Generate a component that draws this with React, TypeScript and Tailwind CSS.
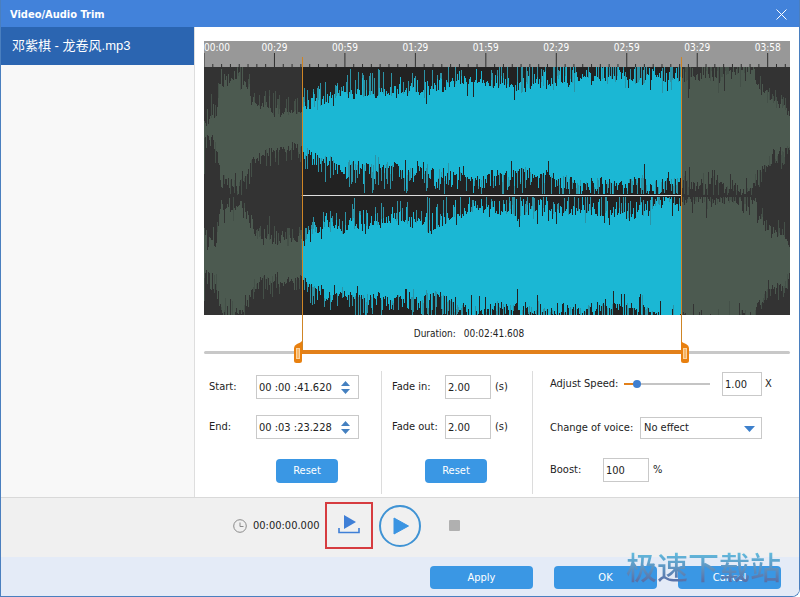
import React, { useState } from 'react'

const TOTAL = 249.5
const SELECTION = { start: 41.62, end: 203.228 }
const MARKS = ['00:00', '00:29', '00:59', '01:29', '01:59', '02:29', '02:59', '03:29', '03:58']
const MARK_STEP = 30

const WAVE_W = 586
const WAVE_H = 248

// [x, solid half height, spike half height]
const ENVELOPE = [
  [0, 8, 46],
  [12, 10, 36],
  [16, 38, 62],
  [24, 42, 66],
  [36, 46, 70],
  [44, 34, 60],
  [48, 24, 56],
  [52, 20, 34],
  [66, 18, 46],
  [76, 18, 34],
  [96, 17, 34],
  [100, 22, 42],
  [118, 27, 54],
  [138, 28, 46],
  [142, 34, 62],
  [170, 36, 64],
  [190, 34, 58],
  [205, 32, 66],
  [230, 32, 64],
  [255, 38, 66],
  [272, 44, 70],
  [290, 44, 72],
  [315, 37, 68],
  [335, 44, 72],
  [350, 42, 72],
  [370, 44, 74],
  [400, 46, 74],
  [420, 46, 72],
  [426, 42, 66],
  [440, 48, 72],
  [478, 52, 74],
  [550, 53, 72],
  [553, 34, 64],
  [562, 30, 42],
  [572, 27, 42],
  [580, 23, 38],
  [586, 12, 24]
]

function random(seed: number) {
  let s = seed
  return () => {
    s = (s * 16807) % 2147483647
    return s / 2147483647
  }
}

function envelopeAt(x: number) {
  const i = Math.max(1, ENVELOPE.findIndex((p) => p[0] > x))
  const a = ENVELOPE[i - 1]
  const b = ENVELOPE[i]
  const t = (x - a[0]) / (b[0] - a[0])
  return [a[1] + (b[1] - a[1]) * t, a[2] + (b[2] - a[2]) * t]
}

function channelPath(center: number, min: number, max: number, seed: number) {
  const next = random(seed)
  let body = ''
  let spikes = ''
  let drift = 0
  for (let x = 0; x < WAVE_W; x++) {
    const [solid, peak] = envelopeAt(x)
    drift = Math.max(-4, Math.min(6, drift + (next() - 0.5) * 5))
    const side = () => {
      const notch = next() > 0.86 ? next() * solid * 0.35 : 0
      return solid + drift - notch + next() * next() * (peak - solid) * 0.8
    }
    const top = Math.max(min, Math.round(center - side()))
    const bottom = Math.min(max, Math.round(center + side()))
    body += `M${x} ${top}h1V${bottom}h-1z`
    if (next() > 0.74) {
      const y = Math.max(min, Math.round(center - solid - (peak - solid) * (0.4 + next() * 0.6)))
      spikes += `M${x} ${y}h1V${center}h-1z`
    }
    if (next() > 0.74) {
      const y = Math.min(max, Math.round(center + solid + (peak - solid) * (0.4 + next() * 0.6)))
      spikes += `M${x} ${center}h1V${y}h-1z`
    }
  }
  return { body, spikes }
}

const CHANNELS = [channelPath(63, 0, 128, 4211), channelPath(193, 130, 248, 90437)]

const percent = (seconds: number) => `${(seconds / TOTAL) * 100}%`

function Ruler() {
  return (
    <svg className="block h-[26px] w-full bg-[#989898] font-[inherit]">
      {MARKS.map((mark, i) => (
        <g key={mark}>
          <line x1={percent(i * MARK_STEP)} x2={percent(i * MARK_STEP)} y1="12" y2="26" stroke="#2f2f2f" />
          {[1, 2, 3, 4, 5, 6, 7].map((n) => (
            <line
              key={n}
              x1={percent((i + n / 8) * MARK_STEP)}
              x2={percent((i + n / 8) * MARK_STEP)}
              y1="23"
              y2="26"
              stroke="#2f2f2f"
            />
          ))}
          <text
            x={percent(i * MARK_STEP)}
            y="10"
            textAnchor={i === 0 ? 'start' : 'middle'}
            fill="#ffffff"
            className="text-[10px]"
          >
            {mark}
          </text>
        </g>
      ))}
    </svg>
  )
}

function Waveform() {
  const left = (SELECTION.start / TOTAL) * WAVE_W
  const right = (SELECTION.end / TOTAL) * WAVE_W

  return (
    <svg
      className="block h-[248px] w-full"
      viewBox={`0 0 ${WAVE_W} ${WAVE_H}`}
      preserveAspectRatio="none"
      shapeRendering="crispEdges"
    >
      <defs>
        <clipPath id="selected">
          <rect x={left} y="0" width={right - left} height={WAVE_H} />
        </clipPath>
      </defs>
      <rect width={WAVE_W} height={WAVE_H} fill="#333333" />
      {CHANNELS.map((c, i) => (
        <g key={i}>
          <path d={c.spikes} fill="#445048" />
          <path d={c.body} fill="#4c5a50" />
        </g>
      ))}
      <g clipPath="url(#selected)">
        <rect width={WAVE_W} height={WAVE_H} fill="#222222" />
        {CHANNELS.map((c, i) => (
          <g key={i}>
            <path d={c.spikes} fill="#2b93a6" />
            <path d={c.body} fill="#1bb7d4" />
          </g>
        ))}
        <rect y="127" width={WAVE_W} height="3" fill="#222222" />
        <rect y="128" width={WAVE_W} height="1" fill="#dddddd" />
      </g>
    </svg>
  )
}

function TrimHandle({ flipped }: { flipped?: boolean }) {
  return (
    <svg className={flipped ? 'block -scale-x-100' : 'block'} width="8" height="22" viewBox="0 0 8 22">
      <path d="M8 0v19.500q0 2.500-2.500 2.500h-3Q0 22 0 19.500V7q0-2.500 3-4Q7 1.500 8 0z" fill="#e8800f" />
      <rect x="2.500" y="7.500" width="3" height="10" fill="#f6b565" stroke="#fbd3a0" />
    </svg>
  )
}

function TrimSlider() {
  const [start, setStart] = useState(SELECTION.start)
  const [end, setEnd] = useState(SELECTION.end)

  return (
    <div className="relative flex h-[22px] items-center">
      <div className="h-[3px] w-full rounded-full bg-[#c8c8c8]" />
      <div
        className="absolute h-1 bg-[#e2801a]"
        style={{ left: percent(start), width: percent(end - start) }}
      />
      <div className="absolute top-0 -translate-x-full" style={{ left: percent(start) }}>
        <TrimHandle />
      </div>
      <div className="absolute top-0" style={{ left: percent(end) }}>
        <TrimHandle flipped />
      </div>
      <input
        type="range"
        aria-label="Start"
        min={0}
        max={TOTAL}
        step="any"
        value={start}
        onChange={(e) => setStart(Math.min(Number(e.target.value), end))}
        className="absolute left-0 h-full w-1/2 opacity-0"
      />
      <input
        type="range"
        aria-label="End"
        min={0}
        max={TOTAL}
        step="any"
        value={end}
        onChange={(e) => setEnd(Math.max(Number(e.target.value), start))}
        className="absolute right-0 h-full w-1/2 opacity-0"
      />
    </div>
  )
}

function TimeField({ id, label, value }: { id: string; label: string; value: string }) {
  return (
    <div className="flex h-6 items-center">
      <label htmlFor={id} className="w-[47px]">
        {label}
      </label>
      <div className="flex h-6 w-[103px] items-center border border-[#c9c9c9] bg-white pr-2">
        <input id={id} defaultValue={value} className="h-full w-full min-w-0 flex-1 pl-0.5 outline-none" />
        <div className="flex flex-col gap-[3px]">
          <button type="button" aria-label={`${label} up`}>
            <svg className="block" width="9" height="5" viewBox="0 0 9 5">
              <path d="M4.500 0L9 5H0z" fill="#4480c0" />
            </svg>
          </button>
          <button type="button" aria-label={`${label} down`}>
            <svg className="block" width="9" height="5" viewBox="0 0 9 5">
              <path d="M4.500 5L9 0H0z" fill="#4480c0" />
            </svg>
          </button>
        </div>
      </div>
    </div>
  )
}

function FadeField({ id, label }: { id: string; label: string }) {
  return (
    <div className="flex h-6 items-center">
      <label htmlFor={id} className="w-[53px] whitespace-nowrap">
        {label}
      </label>
      <input id={id} defaultValue="2.00" className="h-6 w-[46px] border border-[#c9c9c9] px-0.5 outline-none" />
      <span className="ml-1">(s)</span>
    </div>
  )
}

function ResetButton() {
  return (
    <button type="button" className="h-6 w-[62px] rounded bg-[#3a97e4] text-white">
      Reset
    </button>
  )
}

function Settings() {
  const [speed, setSpeed] = useState(1)

  return (
    <div className="grid grid-cols-[178fr_151fr_257fr]">
      <div className="flex flex-col gap-4 border-r border-[#dcdcdc] pt-1 pl-[5px]">
        <TimeField id="start" label="Start:" value="00 :00 :41.620" />
        <TimeField id="end" label="End:" value="00 :03 :23.228" />
        <div className="flex pt-1 pl-[67px]">
          <ResetButton />
        </div>
      </div>

      <div className="flex flex-col gap-4 border-r border-[#dcdcdc] pt-1 pl-[10px]">
        <FadeField id="fade-in" label="Fade in:" />
        <FadeField id="fade-out" label="Fade out:" />
        <div className="flex pt-1 pl-[33px]">
          <ResetButton />
        </div>
      </div>

      <div className="flex flex-col pt-px pb-3 pl-[17px]">
        <div className="flex h-6 items-center">
          <label htmlFor="speed" className="w-[74px] whitespace-nowrap">
            Adjust Speed:
          </label>
          <div className="relative flex h-2 w-[86px] items-center">
            <div className="h-0.5 w-full bg-[#c4c4c4]" />
            <div className="absolute h-0.5 bg-[#e2801a]" style={{ width: `${speed * 14}%` }} />
            <div className="absolute size-2 -translate-x-1/2 rounded-full bg-[#3f7fd0]" style={{ left: `${speed * 15}%` }} />
            <input
              id="speed"
              type="range"
              min={0.1}
              max={6}
              step={0.1}
              value={speed}
              onChange={(e) => setSpeed(Number(e.target.value))}
              className="absolute inset-0 w-full opacity-0"
            />
          </div>
          <input
            aria-label="Speed value"
            value={speed.toFixed(2)}
            readOnly
            className="ml-3 h-6 w-10 border border-[#c9c9c9] px-0.5 outline-none"
          />
          <span className="ml-[3px]">X</span>
        </div>

        <div className="mt-5 flex h-6 items-center">
          <label htmlFor="voice" className="w-[90px] whitespace-nowrap">
            Change of voice:
          </label>
          <div className="relative">
            <select
              id="voice"
              className="block h-[22px] w-[122px] appearance-none border border-[#c9c9c9] bg-white pl-[3px] outline-none"
            >
              <option>No effect</option>
              <option>Female voice</option>
              <option>Male voice</option>
            </select>
            <svg
              className="pointer-events-none absolute top-[9px] right-[7px]"
              width="11"
              height="6"
              viewBox="0 0 11 6"
            >
              <path d="M0 0h11L5.500 6z" fill="#3d80cc" />
            </svg>
          </div>
        </div>

        <div className="mt-[18px] flex h-6 items-center">
          <label htmlFor="boost" className="w-[53px]">
            Boost:
          </label>
          <input id="boost" defaultValue="100" className="h-6 w-[46px] border border-[#c9c9c9] px-0.5 outline-none" />
          <span className="ml-1">%</span>
        </div>
      </div>
    </div>
  )
}

function Player() {
  return (
    <div className="flex h-[60px] items-center border-t border-[#d9d9d9] bg-[#f0f0f0] pb-1 pl-[232px]">
      <svg width="14" height="14" viewBox="0 0 14 14" fill="none" stroke="#8a8a8a">
        <circle cx="7" cy="7" r="6.300" />
        <path d="M7 3.500V7.500h3.500" />
      </svg>
      <span className="ml-1.5 w-[72px]">00:00:00.000</span>
      <button
        type="button"
        aria-label="Play selection"
        className="flex h-[47px] w-12 items-center justify-center border-2 border-[#d63c40]"
      >
        <svg width="24" height="22" viewBox="0 0 24 22">
          <path d="M7 0l12 7-12 7z" fill="#3f7fd6" />
          <path d="M2 13v4.500h20V13" fill="none" stroke="#3f7fd6" strokeWidth="1.600" />
        </svg>
      </button>
      <button
        type="button"
        aria-label="Play"
        className="ml-1.5 flex size-[42px] items-center justify-center rounded-full border-2 border-[#3f93d4]"
      >
        <svg className="ml-0.5" width="16" height="18" viewBox="0 0 16 18">
          <path d="M1 1l14.500 8L1 17z" fill="#3a94e2" stroke="#3a94e2" strokeLinejoin="round" />
        </svg>
      </button>
      <button type="button" aria-label="Stop" className="ml-7 size-[11px] rounded-[1px] bg-[#b0b0b0]" />
    </div>
  )
}

function DialogButton({ children }: { children: React.ReactNode }) {
  return (
    <button type="button" className="h-[23px] w-[103px] rounded bg-[#3a97e4] text-white">
      {children}
    </button>
  )
}

export default function App() {
  return (
    <div className="flex min-h-screen flex-col overflow-hidden rounded-br-lg border border-t-0 border-[#4a7fbf] bg-white font-['DejaVu_Sans_Condensed','Noto_Sans_CJK_SC',sans-serif] text-[11px] leading-4 text-[#222]">
      <header className="flex h-[27px] items-center justify-between bg-[#4282da] pt-0.5 pr-3 pl-[9px] text-white">
        <h1 className="font-bold">Video/Audio Trim</h1>
        <button type="button" aria-label="Close">
          <svg className="block" width="11" height="11" viewBox="0 0 11 11" stroke="#ffffff" fill="none">
            <path d="M.5.500l10 10M10.500.500l-10 10" />
          </svg>
        </button>
      </header>

      <div className="flex flex-1">
        <aside className="w-[194px] shrink-0 border-r border-[#dedede] bg-[#f8f8f8]">
          <ul>
            <li className="flex h-[38px] items-center bg-[#2b65b1] px-[11px] font-['Liberation_Sans','Noto_Sans_CJK_SC',sans-serif] text-[13px] text-white">
              邓紫棋 - 龙卷风.mp3
            </li>
          </ul>
        </aside>

        <main className="min-w-0 flex-1 px-[9px] pt-[14px]">
          <div className="relative">
            <Ruler />
            <Waveform />
            <p className="flex h-[38px] items-center justify-center gap-2 pr-14 text-[10px]">
              <span>Duration:</span>
              <span>00:02:41.608</span>
            </p>
            <div className="absolute top-4 bottom-0 w-px bg-[#cf8526]" style={{ left: percent(SELECTION.start) }} />
            <div className="absolute top-4 bottom-0 w-px bg-[#cf8526]" style={{ left: percent(SELECTION.end) }} />
          </div>
          <div className="-mt-3">
            <TrimSlider />
          </div>
          <div className="mt-2">
            <Settings />
          </div>
        </main>
      </div>

      <Player />

      <footer className="relative flex h-[39px] items-center justify-end gap-[21px] bg-[#e4ebf7] pt-0.5 pr-[18px]">
        <DialogButton>Apply</DialogButton>
        <DialogButton>OK</DialogButton>
        <DialogButton>Cancel</DialogButton>
        <span className="pointer-events-none absolute right-[18px] bottom-2.5 bg-linear-to-b from-[#62cdea] to-[#55659f] bg-clip-text font-['Noto_Sans_CJK_SC',sans-serif] text-[31px] leading-10 font-medium text-transparent">
          极速下载站
        </span>
      </footer>
    </div>
  )
}
